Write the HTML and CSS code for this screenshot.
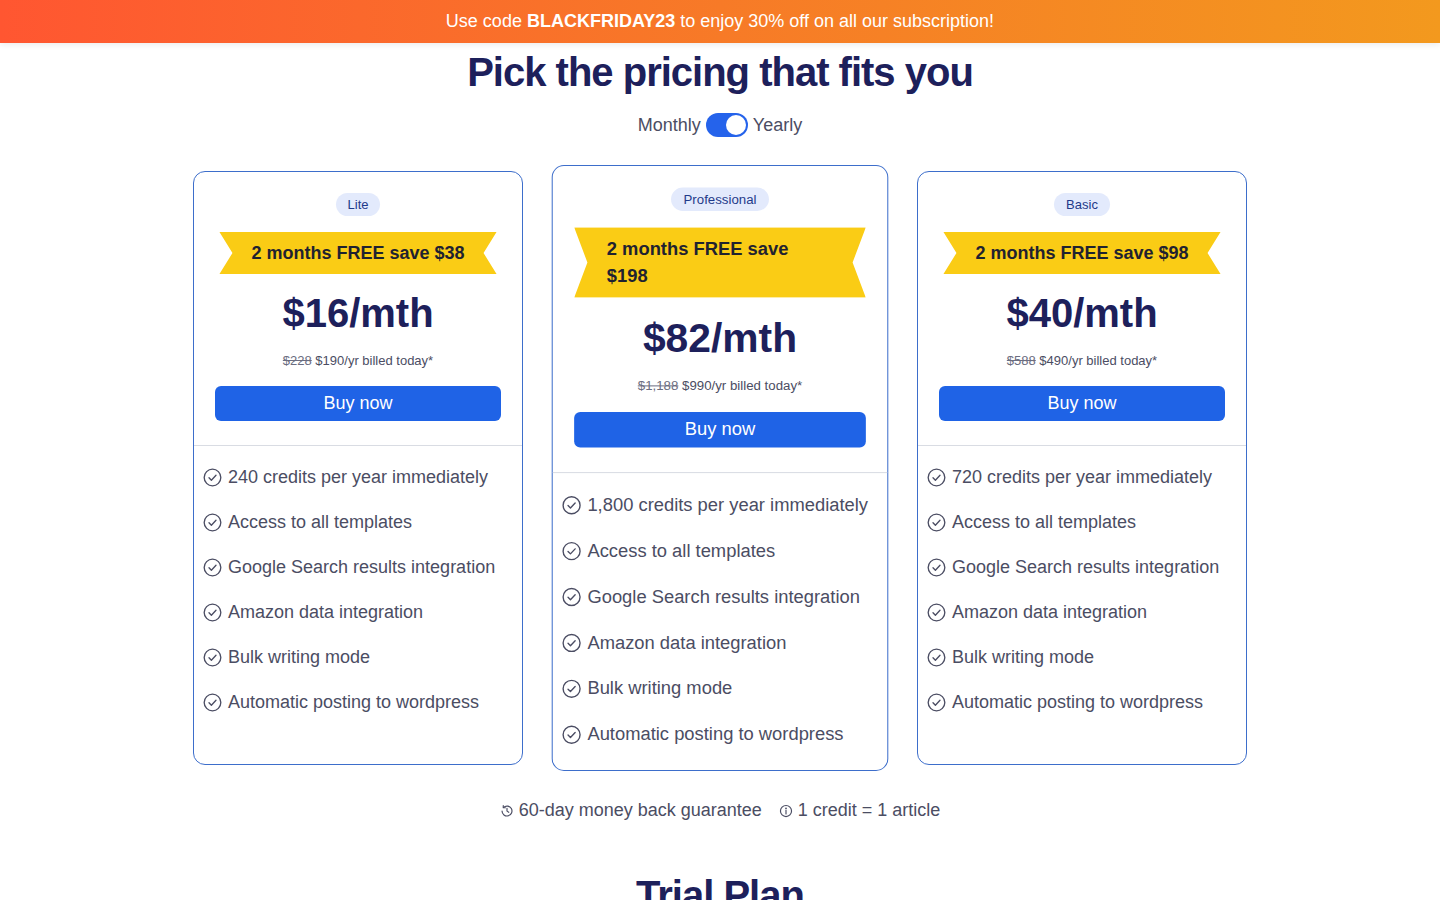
FILE: index.html
```html
<!DOCTYPE html>
<html lang="en">
<head>
<meta charset="utf-8">
<title>Pricing</title>
<link rel="stylesheet" href="styles.css">
</head>
<body>
<div class="promo">Use code <b>BLACKFRIDAY23</b> to enjoy 30% off on all our subscription!</div>
<main class="page">
  <h1 class="title">Pick the pricing that fits you</h1>
  <div class="billing">
    <span>Monthly</span>
    <span class="switch"><span class="knob"></span></span>
    <span>Yearly</span>
  </div>

  <div class="cards">
    <section class="card">
      <div class="card-top">
        <span class="badge">Lite</span>
        <div class="ribbon">2 months FREE save $38</div>
        <div class="price">$16/mth</div>
        <div class="billed"><s>$228</s> $190/yr billed today*</div>
        <button class="buy">Buy now</button>
      </div>
      <ul class="features">
        <li><svg class="check" viewBox="0 0 24 24"><circle cx="12" cy="12" r="10.5"/><path d="M7.6 12.4l3 3 5.8-6.2"/></svg>240 credits per year immediately</li>
        <li><svg class="check" viewBox="0 0 24 24"><circle cx="12" cy="12" r="10.5"/><path d="M7.6 12.4l3 3 5.8-6.2"/></svg>Access to all templates</li>
        <li><svg class="check" viewBox="0 0 24 24"><circle cx="12" cy="12" r="10.5"/><path d="M7.6 12.4l3 3 5.8-6.2"/></svg>Google Search results integration</li>
        <li><svg class="check" viewBox="0 0 24 24"><circle cx="12" cy="12" r="10.5"/><path d="M7.6 12.4l3 3 5.8-6.2"/></svg>Amazon data integration</li>
        <li><svg class="check" viewBox="0 0 24 24"><circle cx="12" cy="12" r="10.5"/><path d="M7.6 12.4l3 3 5.8-6.2"/></svg>Bulk writing mode</li>
        <li><svg class="check" viewBox="0 0 24 24"><circle cx="12" cy="12" r="10.5"/><path d="M7.6 12.4l3 3 5.8-6.2"/></svg>Automatic posting to wordpress</li>
      </ul>
    </section>

    <section class="card card-featured">
      <div class="card-top">
        <span class="badge">Professional</span>
        <div class="ribbon">2 months FREE save $198</div>
        <div class="price">$82/mth</div>
        <div class="billed"><s>$1,188</s> $990/yr billed today*</div>
        <button class="buy">Buy now</button>
      </div>
      <ul class="features">
        <li><svg class="check" viewBox="0 0 24 24"><circle cx="12" cy="12" r="10.5"/><path d="M7.6 12.4l3 3 5.8-6.2"/></svg>1,800 credits per year immediately</li>
        <li><svg class="check" viewBox="0 0 24 24"><circle cx="12" cy="12" r="10.5"/><path d="M7.6 12.4l3 3 5.8-6.2"/></svg>Access to all templates</li>
        <li><svg class="check" viewBox="0 0 24 24"><circle cx="12" cy="12" r="10.5"/><path d="M7.6 12.4l3 3 5.8-6.2"/></svg>Google Search results integration</li>
        <li><svg class="check" viewBox="0 0 24 24"><circle cx="12" cy="12" r="10.5"/><path d="M7.6 12.4l3 3 5.8-6.2"/></svg>Amazon data integration</li>
        <li><svg class="check" viewBox="0 0 24 24"><circle cx="12" cy="12" r="10.5"/><path d="M7.6 12.4l3 3 5.8-6.2"/></svg>Bulk writing mode</li>
        <li><svg class="check" viewBox="0 0 24 24"><circle cx="12" cy="12" r="10.5"/><path d="M7.6 12.4l3 3 5.8-6.2"/></svg>Automatic posting to wordpress</li>
      </ul>
    </section>

    <section class="card">
      <div class="card-top">
        <span class="badge">Basic</span>
        <div class="ribbon">2 months FREE save $98</div>
        <div class="price">$40/mth</div>
        <div class="billed"><s>$588</s> $490/yr billed today*</div>
        <button class="buy">Buy now</button>
      </div>
      <ul class="features">
        <li><svg class="check" viewBox="0 0 24 24"><circle cx="12" cy="12" r="10.5"/><path d="M7.6 12.4l3 3 5.8-6.2"/></svg>720 credits per year immediately</li>
        <li><svg class="check" viewBox="0 0 24 24"><circle cx="12" cy="12" r="10.5"/><path d="M7.6 12.4l3 3 5.8-6.2"/></svg>Access to all templates</li>
        <li><svg class="check" viewBox="0 0 24 24"><circle cx="12" cy="12" r="10.5"/><path d="M7.6 12.4l3 3 5.8-6.2"/></svg>Google Search results integration</li>
        <li><svg class="check" viewBox="0 0 24 24"><circle cx="12" cy="12" r="10.5"/><path d="M7.6 12.4l3 3 5.8-6.2"/></svg>Amazon data integration</li>
        <li><svg class="check" viewBox="0 0 24 24"><circle cx="12" cy="12" r="10.5"/><path d="M7.6 12.4l3 3 5.8-6.2"/></svg>Bulk writing mode</li>
        <li><svg class="check" viewBox="0 0 24 24"><circle cx="12" cy="12" r="10.5"/><path d="M7.6 12.4l3 3 5.8-6.2"/></svg>Automatic posting to wordpress</li>
      </ul>
    </section>
  </div>

  <div class="notes">
    <span class="note"><svg class="note-icon" viewBox="0 0 24 24"><path d="M3.5 12a8.5 8.5 0 1 0 2.6-6.1"/><path d="M5.6 2.8v3.6h3.6"/><path d="M12 7.5v4.7l3 2"/></svg>60-day money back guarantee</span>
    <span class="note"><svg class="note-icon" viewBox="0 0 24 24"><circle cx="12" cy="12" r="9.5"/><path d="M12 11v6"/><circle class="dot" cx="12" cy="7.6" r="0.6"/></svg>1 credit = 1 article</span>
  </div>

  <h2 class="title trial">Trial Plan</h2>
</main>
</body>
</html>
```

FILE: styles.css
```css
* { box-sizing: border-box; }

html, body {
  margin: 0;
  padding: 0;
  background: #ffffff;
  font-family: "Liberation Sans", Arial, sans-serif;
  color: #4b4d63;
}

.promo {
  height: 43px;
  line-height: 43px;
  text-align: center;
  color: #ffffff;
  font-size: 18px;
  background: linear-gradient(90deg, #ff5631 0%, #f77a27 50%, #f3991e 100%);
  box-shadow: 0 2px 6px rgba(0, 0, 0, 0.08);
}

.promo b { font-weight: 700; }

.page {
  display: flex;
  flex-direction: column;
  align-items: center;
}

.title {
  margin: 5px 0 0;
  font-size: 40px;
  line-height: 48px;
  font-weight: 700;
  letter-spacing: -1px;
  color: #1d205b;
  text-align: center;
}

.billing {
  margin-top: 16px;
  height: 26px;
  display: flex;
  align-items: center;
  gap: 5px;
  font-size: 18px;
  color: #4b4d63;
}

.switch {
  width: 42px;
  height: 24px;
  border-radius: 12px;
  background: #2563eb;
  display: flex;
  align-items: center;
  justify-content: flex-end;
  padding: 2px;
}

.knob {
  width: 20px;
  height: 20px;
  border-radius: 50%;
  background: #ffffff;
}

.cards {
  margin-top: 33px;
  display: flex;
  gap: 32px;
  align-items: stretch;
}

.card {
  width: 330px;
  border: 1px solid #3d6ecb;
  border-radius: 12px;
  background: #ffffff;
  display: flex;
  flex-direction: column;
}

.card-featured {
  transform: scale(1.02);
}

.card-top {
  padding: 21px 21px 24px;
  display: flex;
  flex-direction: column;
  align-items: center;
  border-bottom: 1px solid #d9dce3;
}

.badge {
  height: 23px;
  line-height: 23px;
  padding: 0 12px;
  border-radius: 12px;
  background: #e3eafc;
  color: #1f3a8a;
  font-size: 13px;
}

.ribbon {
  margin-top: 16px;
  width: fit-content;
  max-width: 100%;
  padding: 7.5px 32px;
  line-height: 27px;
  font-size: 18px;
  font-weight: 700;
  color: #1f2230;
  text-align: left;
  background: #facc15;
  clip-path: polygon(0 0, 100% 0, calc(100% - 13px) 50%, 100% 100%, 0 100%, 13px 50%);
}

.price {
  margin-top: 15px;
  font-size: 40px;
  line-height: 48px;
  font-weight: 700;
  color: #1d205b;
}

.billed {
  margin-top: 14px;
  font-size: 13px;
  line-height: 20px;
  color: #4b4d63;
}

.billed s { color: #6b6d80; }

.buy {
  margin-top: 15px;
  width: 100%;
  height: 35px;
  border: 0;
  border-radius: 6px;
  background: #1f63e6;
  color: #ffffff;
  font-family: "Liberation Sans", Arial, sans-serif;
  font-size: 18px;
  cursor: pointer;
}

.features {
  list-style: none;
  margin: 0;
  padding: 18px 9px 21px;
  display: flex;
  flex-direction: column;
  gap: 18px;
}

.features li {
  display: flex;
  align-items: center;
  gap: 6px;
  font-size: 18px;
  line-height: 27px;
  color: #4b4d63;
  white-space: nowrap;
}

.check {
  width: 19px;
  height: 19px;
  flex: none;
  fill: none;
  stroke: #4b4d63;
  stroke-width: 1.7;
  stroke-linecap: round;
  stroke-linejoin: round;
}

.notes {
  margin-top: 32px;
  display: flex;
  gap: 17px;
  font-size: 18px;
  line-height: 27px;
  color: #4b4d63;
}

.note {
  display: flex;
  align-items: center;
  gap: 5px;
}

.note-icon {
  width: 14px;
  height: 14px;
  fill: none;
  stroke: #4b4d63;
  stroke-width: 2;
  stroke-linecap: round;
  stroke-linejoin: round;
}

.note-icon .dot { fill: #4b4d63; }

.trial {
  margin-top: 47px;
}
```
